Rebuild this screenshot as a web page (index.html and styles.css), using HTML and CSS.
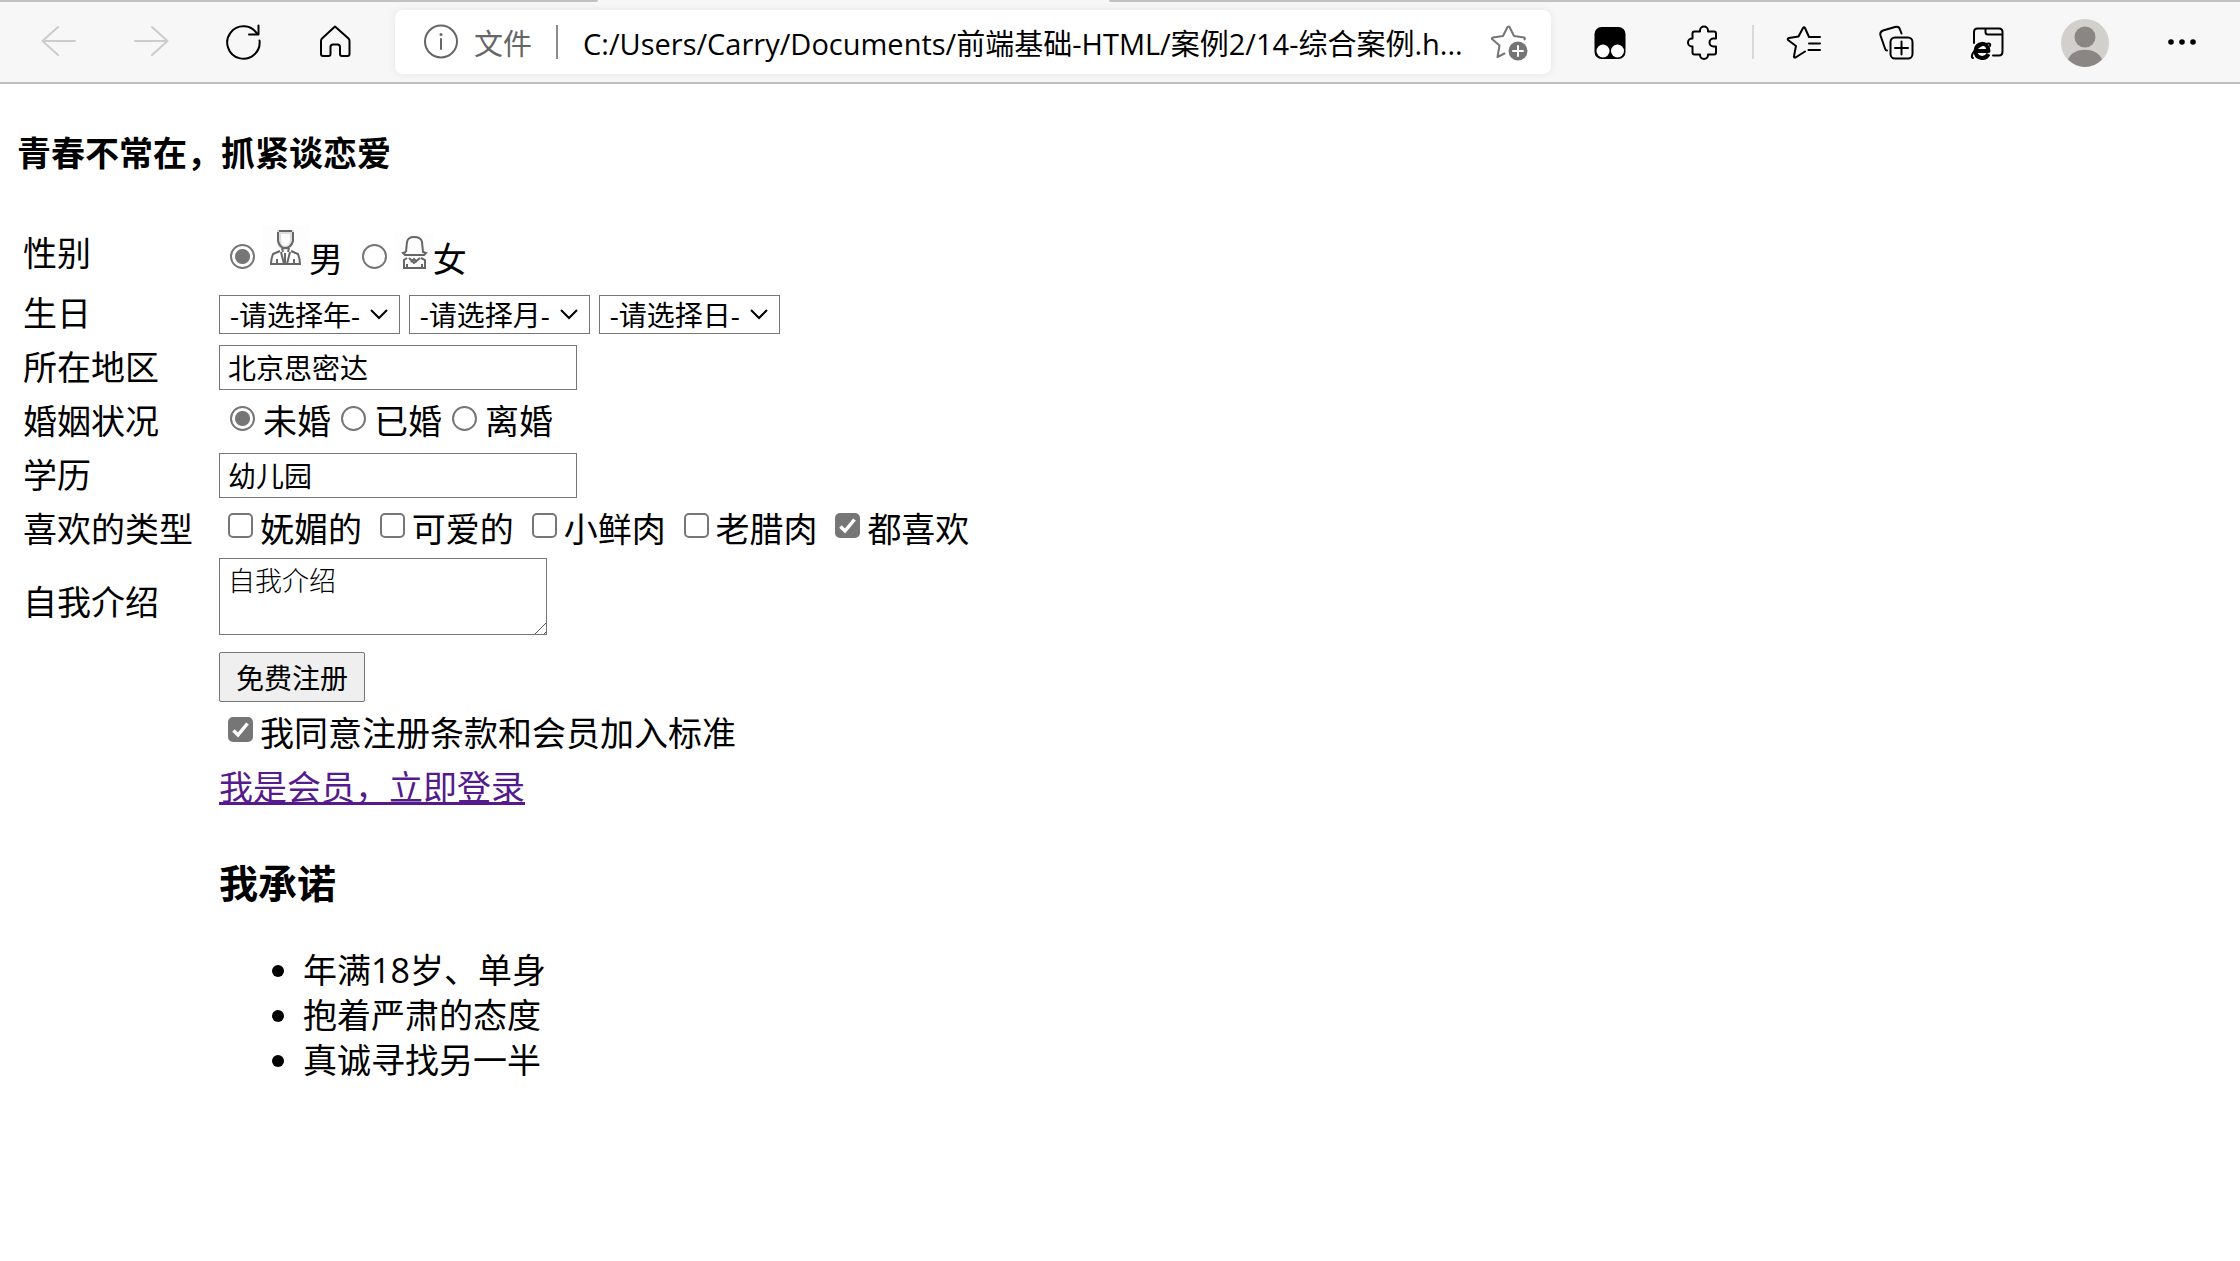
FILE: index.html
```html
<!DOCTYPE html>
<html lang="zh-CN">
<head>
    <meta charset="UTF-8">
    <title>综合案例</title>
    <link rel="stylesheet" href="styles.css">
</head>
<body>
    <!-- 浏览器工具栏 -->
    <header class="toolbar">
        <div class="tab_edge">
            <span class="edge_left"></span>
            <span class="edge_right"></span>
        </div>
        <div class="tools">
            <button class="tool disabled" type="button" aria-label="后退" disabled>
                <svg class="icon" viewBox="0 0 40 40"><path d="M36 18H3.500M19 4L3.500 18L19 32"/></svg>
            </button>
            <button class="tool disabled" type="button" aria-label="前进" disabled>
                <svg class="icon" viewBox="0 0 40 40"><path d="M4 18H36.500M21 4L36.500 18L21 32"/></svg>
            </button>
            <button class="tool" type="button" aria-label="刷新">
                <svg class="icon" viewBox="0 0 40 40"><path d="M36.500 17.500A16.200 16.200 0 1 1 34.500 11.500M35.500 2.500V11.500H26"/></svg>
            </button>
            <button class="tool" type="button" aria-label="主页">
                <svg class="icon" viewBox="0 0 40 40"><path d="M20 3.500L33.500 15.500Q34.500 16.500 34.500 18V31Q34.500 33 32.500 33H27Q25 33 25 31V24Q25 21.500 22.500 21.500H18Q15.500 21.500 15.500 24V31Q15.500 33 13.500 33H8Q6 33 6 31V18Q6 16.500 7 15.500Z"/></svg>
            </button>
            <div class="address">
                <button class="site_info" type="button">
                    <svg class="icon" viewBox="0 0 40 40"><circle cx="20" cy="19.500" r="16"/><path d="M20 17V27"/><circle class="fill" cx="20" cy="12.500" r="1.500"/></svg>
                    文件
                </button>
                <input class="url" type="text" aria-label="地址" value="C:/Users/Carry/Documents/前端基础-HTML/案例2/14-综合案例.h..." readonly>
                <button class="add_fav" type="button" aria-label="添加到收藏夹">
                    <svg class="icon" viewBox="0 0 40 40"><path d="M15.500 31.500L8.500 35L10.500 23.500L3 17Q2.500 16 4 15.500L14 14L18.500 5Q19.500 4 20.500 5L25 14L35 15.500Q36.500 16 35.500 17.500"/><circle class="fill" cx="29" cy="29" r="9.500"/><path class="white" d="M29 24V34M24 29H34"/></svg>
                </button>
            </div>
            <button class="tool" type="button" aria-label="油猴">
                <svg class="icon" viewBox="0 0 40 40"><rect class="fill" x="4.500" y="4" width="31" height="32" rx="7"/><circle class="white_fill" cx="13" cy="28" r="6.500"/><circle class="white_fill" cx="27.500" cy="28" r="6.500"/></svg>
            </button>
            <button class="tool" type="button" aria-label="扩展">
                <svg class="icon" viewBox="0 0 40 40"><path d="M12.500 8.500H18V7.500A4 4 0 0 1 26 7.500V8.500H32Q34 8.500 34 10.500V15.500H31.500A4 4 0 0 0 31.500 23.500H34V29.500Q34 31.500 32 31.500H26V32A4 4 0 0 1 18 32V31.500H12.500Q10.500 31.500 10.500 29.500V23.500H10A4 4 0 0 1 10 15.500H10.500V10.500Q10.500 8.500 12.500 8.500Z"/></svg>
            </button>
            <span class="divider"></span>
            <button class="tool" type="button" aria-label="收藏夹">
                <svg class="icon" viewBox="0 0 40 40"><path d="M21 28.500L11.500 34.500Q9.500 35 10 33L12 23L4 17Q3 15.500 5 15L14.500 13.500L19 5Q20 3.500 21 5L25 14H36M25 20.500H36M24.500 27H36"/></svg>
            </button>
            <button class="tool" type="button" aria-label="集锦">
                <svg class="icon" viewBox="0 0 40 40"><rect x="14.500" y="14.500" width="22" height="21" rx="4.500"/><path d="M25.500 18.500V31.500M19 25H32M11 27.500Q9.500 27.500 9 25.500L4.500 12.500Q3.500 9 7 7.500L19 4Q23 3 24 6.500L25.500 10.500"/></svg>
            </button>
            <button class="tool" type="button" aria-label="IE 模式">
                <svg class="icon" viewBox="0 0 40 40"><path d="M6 20V9Q6 5.500 9.500 5.500H31Q34.500 5.500 34.500 9V28.500Q34.500 32.500 31 32.500H25M17.500 5.500V9Q17.500 11.500 20 11.500H34.500"/><path class="thick" d="M7.500 28H20.500C20 18 7.500 19 7.500 28C7.500 36 17.500 37 20.500 31"/><path d="M5 35C1 34 8 22 20 20.500Q23 20 22 23"/></svg>
            </button>
            <button class="tool profile" type="button" aria-label="个人资料">
                <svg class="avatar" viewBox="0 0 48 48"><circle cx="24" cy="24" r="24" fill="#d2d0cd"/><circle cx="24" cy="18" r="10.500" fill="#8a8683"/><path d="M7 40.500C12 27.500 36 27.500 41 40.500Q33 48 24 48T7 40.500Z" fill="#8a8683"/></svg>
            </button>
            <button class="tool" type="button" aria-label="更多">
                <svg class="icon" viewBox="0 0 40 40"><circle class="fill" cx="9" cy="19" r="2.800"/><circle class="fill" cx="20" cy="19" r="2.800"/><circle class="fill" cx="31" cy="19" r="2.800"/></svg>
            </button>
        </div>
    </header>

    <main class="page">
        <h4>青春不常在，抓紧谈恋爱</h4>
        <form>
            <table>
                <tr>
                    <td class="name">性别</td>
                    <td class="sex">
                        <input type="radio" name="sex" id="nan" checked><label for="nan"><svg class="man" viewBox="0 0 46 47"><path class="soft" d="M16 7H29V16Q28 22 22 23Q16 22 16 16Z"/><path d="M16 6H29M15 7V16Q17 23 22 23Q28 23 30 16V7M19 23L20 27M26 23L25 27M17 26L10 29Q8 34 8 39H37Q37 34 35 29L28 26M18 27L21 39M27 27L24 39M22 28V38M14 34V38M31 34V38"/></svg>男</label>
                        <input type="radio" name="sex" id="nv"><label for="nv"><svg class="woman" viewBox="0 0 38 39"><path d="M11 19L12 9Q13 4 19 4Q26 4 27 9L28 19L31 20L29 22H25M11 19L8 20L10 22H14M14 22H25M12 25L9 27V35H30V27L26 25M14 25L19 30L25 25M16 29L19 26L22 29M12 31V35M27 31V35"/></svg>女</label>
                    </td>
                </tr>
                <tr>
                    <td class="name">生日</td>
                    <td>
                        <select aria-label="年"><option>-请选择年-</option></select>
                        <select aria-label="月"><option>-请选择月-</option></select>
                        <select aria-label="日"><option>-请选择日-</option></select>
                    </td>
                </tr>
                <tr>
                    <td class="name"><label for="area">所在地区</label></td>
                    <td><input class="text" type="text" id="area" value="北京思密达"></td>
                </tr>
                <tr>
                    <td class="name">婚姻状况</td>
                    <td>
                        <input type="radio" name="marry" id="wei" checked><label for="wei">未婚</label><input type="radio" name="marry" id="yi"><label for="yi">已婚</label><input type="radio" name="marry" id="li"><label for="li">离婚</label>
                    </td>
                </tr>
                <tr>
                    <td class="name"><label for="edu">学历</label></td>
                    <td><input class="text" type="text" id="edu" value="幼儿园"></td>
                </tr>
                <tr>
                    <td class="name">喜欢的类型</td>
                    <td>
                        <input type="checkbox" id="like1"><label for="like1">妩媚的</label>
                        <input type="checkbox" id="like2"><label for="like2">可爱的</label>
                        <input type="checkbox" id="like3"><label for="like3">小鲜肉</label>
                        <input type="checkbox" id="like4"><label for="like4">老腊肉</label>
                        <input type="checkbox" id="like5" checked><label for="like5">都喜欢</label>
                    </td>
                </tr>
                <tr>
                    <td class="name"><label for="intro">自我介绍</label></td>
                    <td class="intro"><textarea id="intro">自我介绍</textarea></td>
                </tr>
                <tr>
                    <td></td>
                    <td><button class="submit" type="button">免费注册</button></td>
                </tr>
                <tr>
                    <td></td>
                    <td><input type="checkbox" id="agree" checked><label for="agree">我同意注册条款和会员加入标准</label></td>
                </tr>
                <tr>
                    <td></td>
                    <td><a href="#">我是会员，立即登录</a></td>
                </tr>
                <tr>
                    <td></td>
                    <td>
                        <h3>我承诺</h3>
                        <ul>
                            <li>年满18岁、单身</li>
                            <li>抱着严肃的态度</li>
                            <li>真诚寻找另一半</li>
                        </ul>
                    </td>
                </tr>
            </table>
        </form>
    </main>
</body>
</html>
```
FILE: styles.css
```css
* {
    box-sizing: border-box;
}

body {
    margin: 0;
    background: #fff;
    color: #000;
    font-family: "Open Sans", "Noto Sans CJK SC", sans-serif;
    font-size: 34px;
    line-height: 45px;
}

button, input, select {
    font-family: inherit;
    font-size: 28px;
    color: inherit;
}

/* 工具栏 */
.toolbar {
    background: #f7f7f7;
    border-bottom: 2px solid #bfbfbf;
}

.tab_edge {
    display: flex;
    justify-content: space-between;
    height: 2px;
}

.edge_left, .edge_right {
    background: #c2c2c2;
}

.edge_left {
    width: 26.7%;
    border-bottom-right-radius: 4px;
}

.edge_right {
    width: 50.5%;
    border-bottom-left-radius: 4px;
}

.tools {
    display: flex;
    align-items: center;
    height: 80px;
    padding: 0 12px 0 13px;
}

.tool {
    display: flex;
    flex: none;
    align-items: center;
    justify-content: center;
    width: 92px;
    height: 64px;
    padding: 2px 0 0;
    border: 0;
    background: none;
}

.disabled {
    color: #ccc;
}

.profile {
    width: 102px;
}

.icon {
    flex: none;
    width: 40px;
    height: 40px;
    fill: none;
    stroke: currentColor;
    stroke-width: 2;
    stroke-linecap: round;
    stroke-linejoin: round;
}

.icon .fill {
    fill: currentColor;
    stroke: none;
}

.icon .white {
    stroke: #fff;
}

.icon .white_fill {
    fill: #fff;
    stroke: none;
}

.icon .thick {
    stroke-width: 4;
    stroke-linecap: butt;
}

.avatar {
    width: 48px;
    height: 48px;
}

.divider {
    width: 2px;
    height: 34px;
    margin: 0 4px;
    background: #d9d9d9;
}

.address {
    display: flex;
    flex: 1;
    align-items: center;
    min-width: 0;
    height: 64px;
    margin: 0 13px 0 14px;
    border-radius: 8px;
    background: #fff;
    box-shadow: 0 0 8px rgba(0, 0, 0, 0.08);
}

.site_info {
    display: flex;
    flex: none;
    align-items: center;
    gap: 13px;
    height: 34px;
    padding: 0 24px 0 26px;
    border: 0;
    border-right: 2px solid #8c8c8c;
    background: none;
    color: #666;
    font-size: 29px;
}

.url {
    flex: 1;
    min-width: 0;
    padding: 0 0 0 25px;
    border: 0;
    background: none;
    font-size: 29px;
    outline: none;
}

.add_fav {
    display: flex;
    padding: 0 22px 0 16px;
    border: 0;
    background: none;
    color: #757575;
}

/* 表单 */
.page {
    padding: 0 17px;
}

h4 {
    margin: 47px 0 43px;
    font-size: 34px;
}

table {
    border-spacing: 4px;
}

td {
    height: 50px;
    padding: 2px;
}

.name {
    width: 192px;
}

.sex {
    height: 58px;
}

input[type="radio"], input[type="checkbox"] {
    appearance: none;
    width: 25px;
    height: 25px;
    border: 2px solid #767676;
    background: #fff;
}

input[type="radio"] {
    margin: 6px 8px 3px 11px;
    border-radius: 50%;
}

label + input[type="radio"] {
    margin-left: 10px;
}

input[type="checkbox"] {
    margin: 6px 7px 4px 9px;
    border-radius: 5px;
}

input[type="checkbox"]:checked {
    background: #767676 url("data:image/svg+xml,%3Csvg xmlns='http://www.w3.org/2000/svg' viewBox='0 0 21 21'%3E%3Cpath d='M3.500 11.500L8 16L17.500 4.500' fill='none' stroke='white' stroke-width='3.500'/%3E%3C/svg%3E") center no-repeat;
}

input[type="radio"]:checked {
    background: radial-gradient(circle, #767676 7px, #fff 8px);
}

.man, .woman {
    background: #fdfdfd;
    fill: none;
    stroke: #666;
    stroke-width: 2;
}

.man {
    width: 46px;
    height: 47px;
}

.woman {
    width: 38px;
    height: 39px;
}

.man .soft {
    stroke: #ddd;
    stroke-width: 4;
}

select {
    appearance: none;
    width: 181px;
    height: 39px;
    padding: 0 10px;
    border: 1px solid #767676;
    border-radius: 0;
    background: #fff url("data:image/svg+xml,%3Csvg xmlns='http://www.w3.org/2000/svg' width='18' height='12'%3E%3Cpath d='M1 2L9 10L17 2' fill='none' stroke='black' stroke-width='2'/%3E%3C/svg%3E") right 11px center no-repeat;
}

.text {
    width: 358px;
    height: 45px;
    padding: 2px 8px;
    border: 1px solid #767676;
}

textarea {
    width: 328px;
    height: 77px;
    padding: 3px 8px;
    border: 1px solid #767676;
    font-family: "Noto Sans CJK SC", monospace;
    font-size: 27px;
    font-weight: 300;
    line-height: 36px;
    vertical-align: top;
}

textarea::-webkit-scrollbar {
    width: 21px;
    height: 21px;
}

textarea::-webkit-resizer {
    background: url("data:image/svg+xml,%3Csvg xmlns='http://www.w3.org/2000/svg' width='21' height='21'%3E%3Cpath d='M1 18L18 1M10 18L18 10' stroke='%23555'/%3E%3C/svg%3E") no-repeat;
}

.intro {
    padding: 0 2px 11px;
}

.submit {
    width: 146px;
    height: 50px;
    padding: 0;
    border: 1px solid #767676;
    border-radius: 2px;
    background: #efefef;
    vertical-align: top;
}

a {
    color: #551a8b;
}

h3 {
    margin: 39px 0;
    font-size: 39px;
    line-height: 52px;
}

ul {
    margin: 39px 0;
    padding-left: 84px;
}
```
